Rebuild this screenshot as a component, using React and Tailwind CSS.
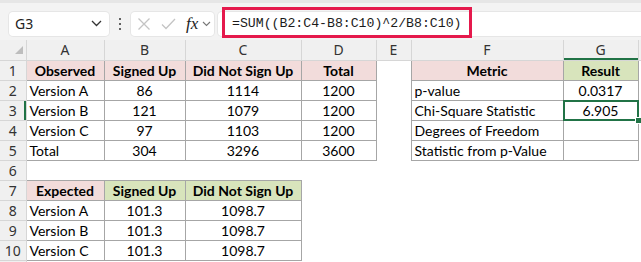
import React from 'react';

const PINK = 'bg-[#f2dcdb]';
const GREEN = 'bg-[#d8e4bc]';

const cols = [78, 81, 116, 75, 35, 152, 75, 3];
const letters = ['A', 'B', 'C', 'D', 'E', 'F', 'G', ''];

// cell helper: text, bold, background, left align
const c = (t, o = {}) => ({ t, box: true, ...o });
const h = (t, bg) => c(t, { b: true, bg });

const rows = {
  1: [h('Observed', PINK), h('Signed Up', PINK), h('Did Not Sign Up', PINK), h('Total', PINK), null, h('Metric', PINK), h('Result', GREEN), null],
  2: [c('Version A', { l: true }), c('86'), c('1114'), c('1200'), null, c('p-value', { l: true }), c('0.0317'), null],
  3: [c('Version B', { l: true }), c('121'), c('1079'), c('1200'), null, c('Chi-Square Statistic', { l: true }), c('6.905', { sel: true }), null],
  4: [c('Version C', { l: true }), c('97'), c('1103'), c('1200'), null, c('Degrees of Freedom', { l: true }), c(''), null],
  5: [c('Total', { l: true }), c('304'), c('3296'), c('3600'), null, c('Statistic from p-Value', { l: true }), c(''), null],
  6: [null, null, null, null, null, null, null, null],
  7: [h('Expected', PINK), h('Signed Up', GREEN), h('Did Not Sign Up', GREEN), null, null, null, null, null],
  8: [c('Version A', { l: true }), c('101.3'), c('1098.7'), null, null, null, null, null],
  9: [c('Version B', { l: true }), c('101.3'), c('1098.7'), null, null, null, null, null],
  10: [c('Version C', { l: true }), c('101.3'), c('1098.7'), null, null, null, null, null],
};

function FormulaBar() {
  return (
    <div className="relative flex items-center h-[37px] pt-[4px] bg-[#f3f3f3]">
      {/* name box */}
      <div className="ml-[9px] w-[100px] h-[24px] bg-white rounded-[4px] flex items-center justify-between pl-[6px] pr-[7px] shadow-[0_0_0_1px_#e6e6e6]">
        <span className="text-[14px] text-[#222] font-['Noto_Sans',sans-serif]">G3</span>
        <svg width="11" height="7" viewBox="0 0 11 7"><path d="M1 1l4.5 4.5L10 1" fill="none" stroke="#333" strokeWidth="1.3" /></svg>
      </div>
      {/* dots */}
      <div className="w-[22px] flex flex-col items-center gap-[3px]">
        <span className="w-[2px] h-[2px] bg-[#333] rounded-full" />
        <span className="w-[2px] h-[2px] bg-[#333] rounded-full" />
        <span className="w-[2px] h-[2px] bg-[#333] rounded-full" />
      </div>
      {/* fx box */}
      <div className="w-[83px] h-[24px] bg-white rounded-[4px] flex items-center pl-[5px] shadow-[0_0_0_1px_#e6e6e6]">
        <svg width="14" height="14" viewBox="0 0 14 14" className="ml-[1px]"><path d="M1.5 1.5l11 11M12.5 1.5l-11 11" stroke="#c4c4c4" strokeWidth="1.3" /></svg>
        <svg width="15" height="12" viewBox="0 0 15 12" className="ml-[10px]"><path d="M1 6.5l4 4L14 1" fill="none" stroke="#c4c4c4" strokeWidth="1.3" /></svg>
        <span className="ml-[10px] text-[17px] leading-none italic text-[#222] font-['Liberation_Serif',serif]">fx</span>
        <svg width="9" height="6" viewBox="0 0 9 6" className="ml-[4px]"><path d="M1 1l3.5 3.5L8 1" fill="none" stroke="#777" strokeWidth="1.1" /></svg>
      </div>
      {/* formula input */}
      <div className="ml-[4px] flex-1 h-[24px] bg-white rounded-l-[4px] flex items-center pl-[14px] shadow-[0_0_0_1px_#e6e6e6]">
        <span className="text-[13.2px] text-[#1b1b1b] font-['Liberation_Mono',monospace]">=SUM((B2:C4-B8:C10)^2/B8:C10)</span>
      </div>
      {/* red annotation */}
      <div className="absolute left-[222px] top-[4px] w-[250px] h-[31px] border-[3px] border-[#e5194c] pointer-events-none" />
    </div>
  );
}

function Grid() {
  const hdr = 'h-[20px] p-0 pt-[1px] bg-[#f0f0f0] border border-[#d6d6d6] text-[14px] leading-[18px] font-normal text-[#333] font-["Noto_Sans",sans-serif] text-center';
  return (
    <table className="table-fixed border-collapse w-[641px] bg-white font-['Lato',sans-serif]">
      <colgroup>
        <col style={{ width: 26 }} />
        {cols.map((w, i) => <col key={i} style={{ width: w }} />)}
      </colgroup>
      <thead>
        <tr className="h-[20px]">
          <th className={hdr + ' relative border-t-0 border-l-0'}>
            <svg width="8" height="8" viewBox="0 0 8 8" className="absolute right-[3px] bottom-[6px]"><path d="M8 0V8H0Z" fill="#bdbdbd" /></svg>
          </th>
          {letters.map((l, i) => (
            <th
              key={i}
              className={hdr + ' border-t-0 ' + (l === 'G' ? 'bg-[#d4d4d4] text-[#1d6b40] shadow-[inset_0_-2px_0_#217346]' : '')}
            >
              {l}
            </th>
          ))}
        </tr>
      </thead>
      <tbody>
        {Object.entries(rows).map(([n, cells]) => (
          <tr key={n} className="h-[20px]">
            <th className={hdr + ' border-l-0 ' + (n === '3' ? 'bg-[#d4d4d4] text-[#1d6b40] shadow-[inset_-2px_0_0_#217346]' : '')}>
              {n}
            </th>
            {cells.map((cell, i) =>
              cell ? (
                <td
                  key={i}
                  className={
                    'relative h-[20px] p-0 pt-[1px] px-[3px] border border-[#a6a6a6] text-[14px] leading-[18px] text-black whitespace-nowrap overflow-visible ' +
                    (cell.b ? 'font-bold ' : '') +
                    (cell.bg || '') +
                    (cell.l ? ' text-left' : ' text-center')
                  }
                >
                  {cell.t}
                  {cell.sel && (
                    <>
                      <div className="absolute -left-[1px] -top-[1px] -right-[1px] -bottom-[1px] border-2 border-[#217346]" />
                      <div className="absolute -right-[4px] -bottom-[4px] w-[7px] h-[7px] bg-[#217346] border border-white" />
                    </>
                  )}
                </td>
              ) : (
                <td key={i} className="h-[20px] p-0 leading-[18px]" />
              )
            )}
          </tr>
        ))}
        <tr className="h-[20px]">
          <th className={hdr + ' border-l-0'} />
          <td colSpan={8} />
        </tr>
      </tbody>
    </table>
  );
}

export default function App() {
  return (
    <div className="w-[641px] h-[262px] overflow-hidden bg-[#f3f3f3]">
      <div className="h-[3px] bg-[#e6e6e6]" />
      <FormulaBar />
      <Grid />
    </div>
  );
}
